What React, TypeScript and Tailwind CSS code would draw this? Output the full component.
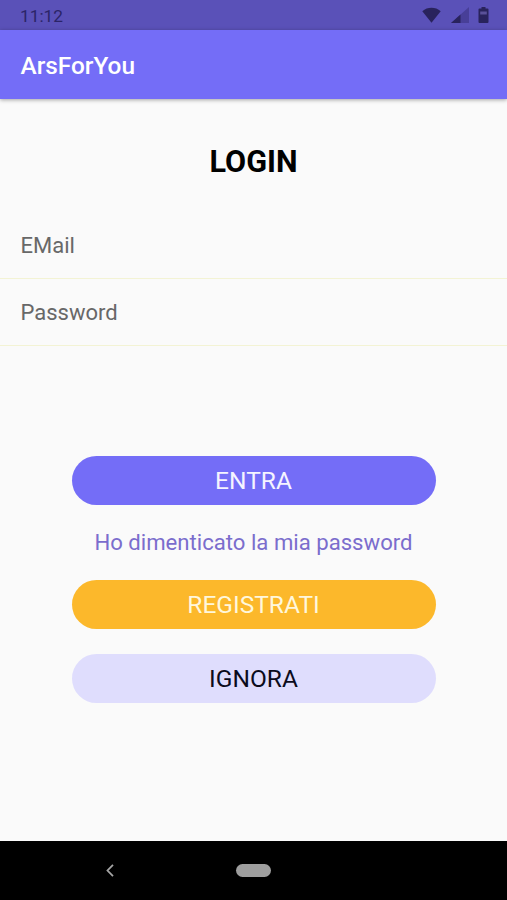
function StatusBar() {
  return (
    <div className="flex h-[30px] items-center justify-between bg-[#5a51b8] pr-[18px] pl-5 text-[#2b2467]">
      <span className="pt-[3px] text-[17.3px] leading-none">11:12</span>
      <div className="flex items-center">
        <svg className="mr-[10px] h-4 w-[19px]" viewBox="0 0 19 16" fill="#29235c">
          <path d="M0.3 4.2C5.5-0.3 13.5-0.3 18.7 4.2L9.5 15.8Z" />
        </svg>
        <svg className="mr-[9px] h-4 w-[18px]" viewBox="0 0 18 16">
          <path d="M0 16L18 0V16Z" fill="#483f98" />
          <path d="M0 16L9.5 7.5V16Z" fill="#29235c" />
        </svg>
        <svg className="h-4 w-[11px]" viewBox="0 0 11 16">
          <path d="M3.5 0H7.5V1.5H9.5Q10.5 1.5 10.5 2.5V15Q10.5 16 9.5 16H1.5Q0.5 16 0.5 15V2.5Q0.5 1.5 1.5 1.5H3.5Z" fill="#29235c" />
          <path d="M2.2 4.5H8.8V7.5H2.2Z" fill="#5a5199" />
        </svg>
      </div>
    </div>
  );
}

function NavigationBar() {
  return (
    <div className="grid h-[59px] grid-cols-[220px_67px_220px] items-center justify-items-center bg-black">
      <svg
        className="h-[13px] w-2"
        viewBox="0 0 8 13"
        fill="none"
        stroke="#a5a5a5"
        strokeWidth="1.8"
      >
        <path d="M7 0.8L1.5 6.5L7 12.2" />
      </svg>
      <div className="h-[13px] w-[35px] rounded-full bg-[#9e9e9e]" />
    </div>
  );
}

export default function App() {
  return (
    <div className="flex h-[900px] w-[507px] flex-col overflow-hidden bg-[#fafafa] font-['Roboto',sans-serif]">
      <StatusBar />
      <header className="flex h-[69px] items-center bg-[#746df7] pl-[20.5px] shadow-[0_1px_4px_rgba(0,0,0,0.35)]">
        <h1 className="pt-[4px] text-[24.4px] leading-none font-medium text-white">ArsForYou</h1>
      </header>

      <main className="flex flex-1 flex-col">
        <h2 className="mt-[45px] text-center text-[30.6px] leading-[36px] font-bold text-black">
          LOGIN
        </h2>
        <form className="mt-[32px] text-[22px] text-[#686868]">
          <input
            type="email"
            placeholder="EMail"
            className="block h-[67px] w-full border-b border-[#f3f3d4] px-[20.5px] outline-none placeholder:text-[#686868]"
          />
          <input
            type="password"
            placeholder="Password"
            className="block h-[67px] w-full border-b border-[#f3f3d4] px-[20.5px] outline-none placeholder:text-[#686868]"
          />
        </form>

        <div className="mt-[110px] flex flex-col items-center">
          <button className="h-[49px] w-[364px] rounded-full bg-[#746df7] pt-[2px] text-[24.5px] text-[#f5f4ff]">
            ENTRA
          </button>
          <a className="flex h-[75px] items-center pt-px text-[22.15px] text-[#7b6dcd]">
            Ho dimenticato la mia password
          </a>
          <button className="h-[49px] w-[364px] rounded-full bg-[#fcb82b] pt-[2px] text-[24.5px] text-[#fff7dc]">
            REGISTRATI
          </button>
          <button className="mt-[25px] h-[49px] w-[364px] rounded-full bg-[#dfddfd] pt-[2px] text-[24.5px] text-[#0b0b1c]">
            IGNORA
          </button>
        </div>
      </main>

      <NavigationBar />
    </div>
  );
}
